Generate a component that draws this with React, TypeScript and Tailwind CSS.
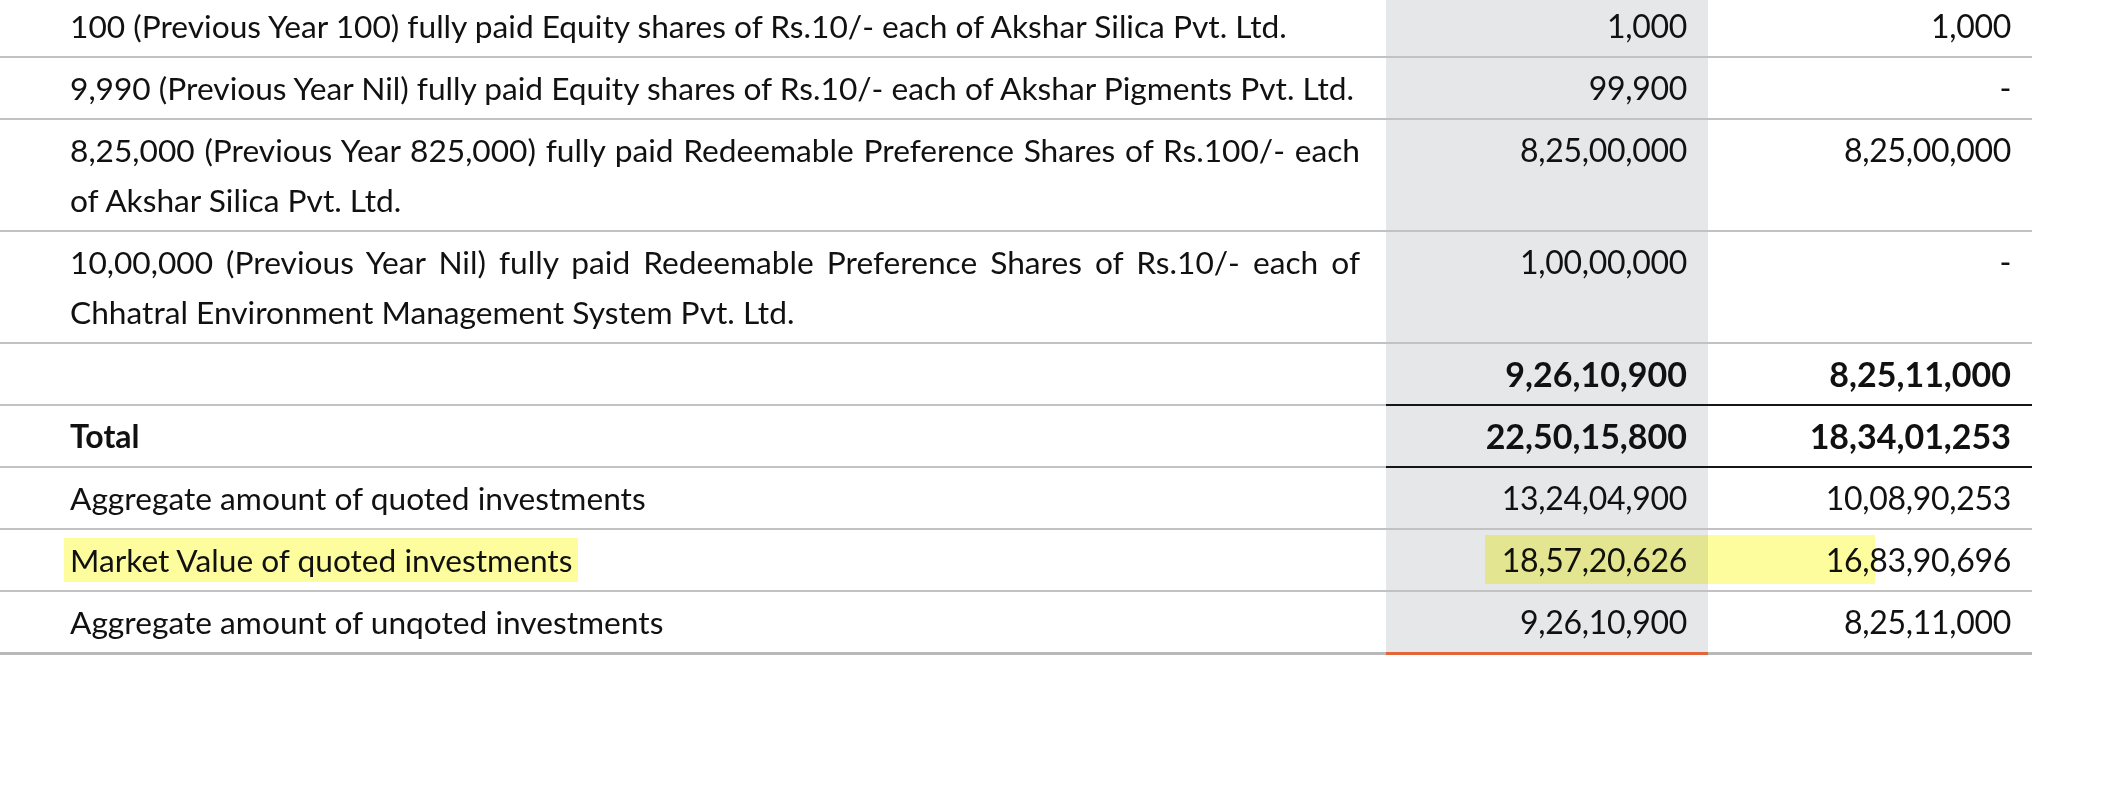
import React from "react";

type Row = {
  lines: string[];
  current: string;
  previous: string;
  bold?: boolean;
  strong?: boolean;
  marked?: boolean;
  first?: boolean;
  last?: boolean;
};

const rows: Row[] = [
  {
    lines: [
      "100 (Previous Year 100) fully paid Equity shares of Rs.10/- each of Akshar Silica Pvt. Ltd.",
    ],
    current: "1,000",
    previous: "1,000",
    first: true,
  },
  {
    lines: [
      "9,990 (Previous Year Nil) fully paid Equity shares of Rs.10/- each of Akshar Pigments Pvt. Ltd.",
    ],
    current: "99,900",
    previous: "-",
  },
  {
    lines: [
      "8,25,000 (Previous Year 825,000) fully paid Redeemable Preference Shares of Rs.100/- each",
      "of Akshar Silica Pvt. Ltd.",
    ],
    current: "8,25,00,000",
    previous: "8,25,00,000",
  },
  {
    lines: [
      "10,00,000 (Previous Year Nil) fully paid Redeemable Preference Shares of Rs.10/- each of",
      "Chhatral Environment Management System Pvt. Ltd.",
    ],
    current: "1,00,00,000",
    previous: "-",
  },
  { lines: [""], current: "9,26,10,900", previous: "8,25,11,000", bold: true, strong: true },
  { lines: ["Total"], current: "22,50,15,800", previous: "18,34,01,253", bold: true, strong: true },
  { lines: ["Aggregate amount of quoted investments"], current: "13,24,04,900", previous: "10,08,90,253" },
  { lines: ["Market Value of quoted investments"], current: "18,57,20,626", previous: "16,83,90,696", marked: true },
  { lines: ["Aggregate amount of unqoted investments"], current: "9,26,10,900", previous: "8,25,11,000", last: true },
];

const font = "font-['Lato','Open_Sans',sans-serif]";

const Description: React.FC<{ row: Row }> = ({ row }) => {
  if (row.bold) {
    return <div className="font-bold text-[32px]">{row.lines[0]}</div>;
  }
  if (row.marked) {
    return (
      <span className="inline-block -ml-[6px] px-[6px] leading-[44px] bg-[#fdfd9e]">
        {row.lines[0]}
      </span>
    );
  }
  if (row.lines.length > 1) {
    return (
      <>
        <div className="text-justify [text-align-last:justify]">{row.lines[0]}</div>
        <div>{row.lines[1]}</div>
      </>
    );
  }
  return <div className="whitespace-nowrap">{row.lines[0]}</div>;
};

const TableRow: React.FC<{ row: Row }> = ({ row }) => {
  const pad = row.first ? "pt-[1px] pb-[5px]" : "py-[5px]";
  const line = row.last ? "border-b-[3px] border-[#b9b9b9]" : "border-b-2 border-[#c2c2c2]";
  const numLine = row.strong ? "border-b-2 border-[#161616]" : line;
  const midLine = row.last ? "border-b-[3px] border-[#e2663a]" : numLine;
  const num = row.bold ? "font-bold text-[34px]" : "text-[32px] tracking-[-0.3px]";

  return (
    <div className={`relative grid grid-cols-[1386px_322px_324px] leading-[50px] text-[#111] ${font}`}>
      <div className={`${pad} ${line} pl-[70px] pr-[26px] text-[31.7px]`}>
        <Description row={row} />
      </div>
      <div className={`${pad} ${midLine} bg-[#e6e7e8] pr-[21px] text-right ${num}`}>
        {row.current}
      </div>
      <div className={`${pad} ${numLine} pr-[21px] text-right ${num}`}>{row.previous}</div>
      {row.marked && (
        <div className="absolute left-[1485px] top-[5px] w-[390px] h-[49px] bg-[#fdfd9e] mix-blend-multiply" />
      )}
    </div>
  );
};

export default function App() {
  return (
    <div className="w-[2116px] h-[808px] bg-white overflow-hidden">
      <div className="w-[2032px]">
        {rows.map((row, i) => (
          <TableRow key={i} row={row} />
        ))}
      </div>
    </div>
  );
}
